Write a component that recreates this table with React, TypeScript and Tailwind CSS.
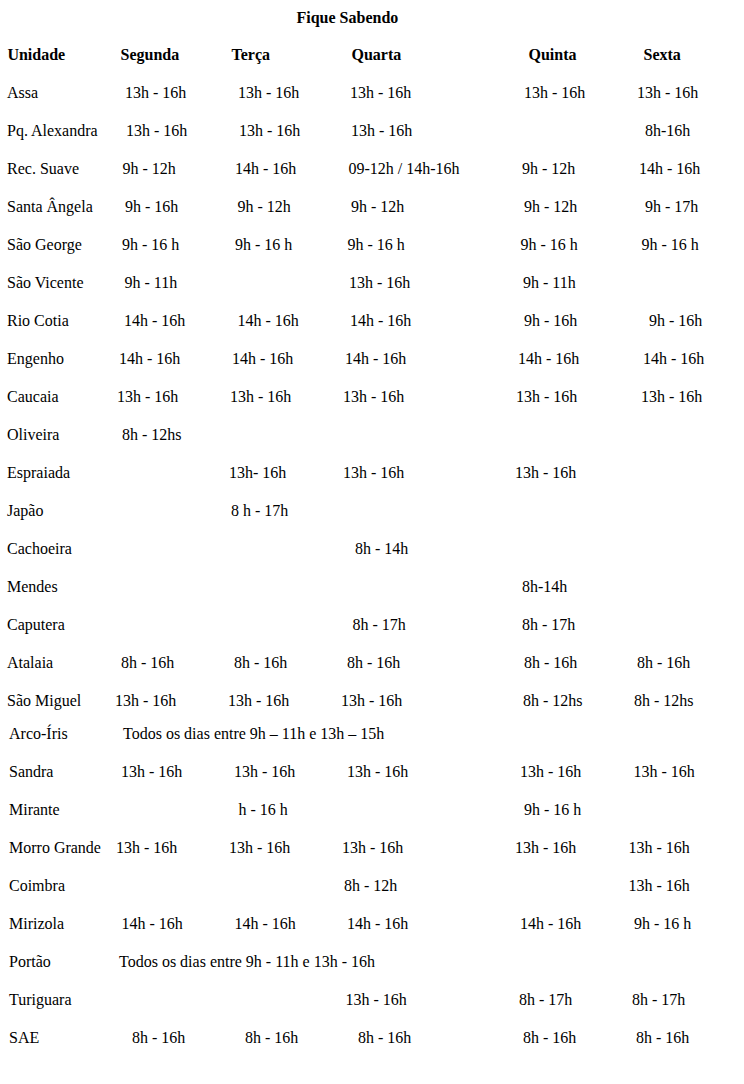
import clsx from "clsx";

// each cell: [left x in px, text]
type Cell = [number, string];
type Row = { cells: Cell[]; bold?: boolean; lift?: boolean };

const rows: Row[] = [
  {
    bold: true,
    cells: [[7.4, "Unidade"], [120.5, "Segunda"], [231.5, "Terça"], [351.5, "Quarta"], [528.5, "Quinta"], [643.5, "Sexta"]],
  },
  { cells: [[7, "Assa"], [125, "13h - 16h"], [238, "13h - 16h"], [350, "13h - 16h"], [524, "13h - 16h"], [637, "13h - 16h"]] },
  { cells: [[7, "Pq. Alexandra"], [126, "13h - 16h"], [239, "13h - 16h"], [351, "13h - 16h"], [645, "8h-16h"]] },
  { cells: [[7, "Rec. Suave"], [122.5, "9h - 12h"], [235, "14h - 16h"], [348.5, "09-12h / 14h-16h"], [522, "9h - 12h"], [639, "14h - 16h"]] },
  { cells: [[7, "Santa Ângela"], [125, "9h - 16h"], [237.5, "9h - 12h"], [351, "9h - 12h"], [524, "9h - 12h"], [645, "9h - 17h"]] },
  { cells: [[7, "São George"], [122, "9h - 16 h"], [235, "9h - 16 h"], [347.5, "9h - 16 h"], [520.5, "9h - 16 h"], [641.5, "9h - 16 h"]] },
  { cells: [[7, "São Vicente"], [124.5, "9h - 11h"], [349, "13h - 16h"], [523, "9h - 11h"]] },
  { cells: [[7, "Rio Cotia"], [124, "14h - 16h"], [237.5, "14h - 16h"], [350, "14h - 16h"], [524, "9h - 16h"], [649, "9h - 16h"]] },
  { cells: [[7, "Engenho"], [119, "14h - 16h"], [232, "14h - 16h"], [345, "14h - 16h"], [518, "14h - 16h"], [643, "14h - 16h"]] },
  { cells: [[7, "Caucaia"], [117, "13h - 16h"], [230, "13h - 16h"], [343, "13h - 16h"], [516, "13h - 16h"], [641, "13h - 16h"]] },
  { cells: [[7, "Oliveira"], [122, "8h - 12hs"]] },
  { cells: [[7, "Espraiada"], [229, "13h- 16h"], [343, "13h - 16h"], [515, "13h - 16h"]] },
  { cells: [[7, "Japão"], [231, "8 h - 17h"]] },
  { cells: [[7, "Cachoeira"], [355, "8h - 14h"]] },
  { cells: [[7, "Mendes"], [522, "8h-14h"]] },
  { cells: [[7, "Caputera"], [352.5, "8h - 17h"], [522, "8h - 17h"]] },
  { cells: [[7, "Atalaia"], [121, "8h - 16h"], [234, "8h - 16h"], [347, "8h - 16h"], [524, "8h - 16h"], [637, "8h - 16h"]] },
  { cells: [[7, "São Miguel"], [115, "13h - 16h"], [228, "13h - 16h"], [341, "13h - 16h"], [523, "8h - 12hs"], [634, "8h - 12hs"]] },
  { lift: true, cells: [[9, "Arco-Íris"], [123, "Todos os dias entre 9h – 11h e 13h – 15h"]] },
  { cells: [[9, "Sandra"], [121, "13h - 16h"], [234, "13h - 16h"], [347, "13h - 16h"], [520, "13h - 16h"], [633.5, "13h - 16h"]] },
  { cells: [[9, "Mirante"], [238.5, "h - 16 h"], [524, "9h - 16 h"]] },
  { cells: [[9, "Morro Grande"], [116, "13h - 16h"], [229, "13h - 16h"], [342, "13h - 16h"], [515, "13h - 16h"], [628.5, "13h - 16h"]] },
  { cells: [[9, "Coimbra"], [344, "8h - 12h"], [628.5, "13h - 16h"]] },
  { cells: [[9, "Mirizola"], [121.5, "14h - 16h"], [234.5, "14h - 16h"], [347, "14h - 16h"], [520, "14h - 16h"], [634, "9h - 16 h"]] },
  { cells: [[9, "Portão"], [119, "Todos os dias entre 9h - 11h e 13h - 16h"]] },
  { cells: [[9, "Turiguara"], [345.5, "13h - 16h"], [519, "8h - 17h"], [632, "8h - 17h"]] },
  { cells: [[9, "SAE"], [132, "8h - 16h"], [245, "8h - 16h"], [358, "8h - 16h"], [523, "8h - 16h"], [636, "8h - 16h"]] },
];

function Line({ row }: { row: Row }) {
  return (
    <div
      className={clsx(
        "flex h-[38px] whitespace-nowrap leading-[38px]",
        row.bold && "font-bold",
        row.lift && "-mt-[5px]"
      )}
    >
      {row.cells.map(([x, text], i) => {
        const next = row.cells[i + 1];
        return (
          <div
            key={i}
            className="shrink-0"
            style={{ marginLeft: i === 0 ? x : 0, width: next ? next[0] - x : undefined }}
          >
            {text}
          </div>
        );
      })}
    </div>
  );
}

export default function App() {
  return (
    <div className="min-h-[1084px] w-[744px] bg-white text-[16px] text-black font-['Liberation_Serif','Times_New_Roman',serif]">
      <div className="pt-[8px] pl-[296.5px] leading-[20px] font-bold">Fique Sabendo</div>
      <div className="mt-[8px]">
        {rows.map((row, i) => (
          <Line key={i} row={row} />
        ))}
      </div>
    </div>
  );
}
